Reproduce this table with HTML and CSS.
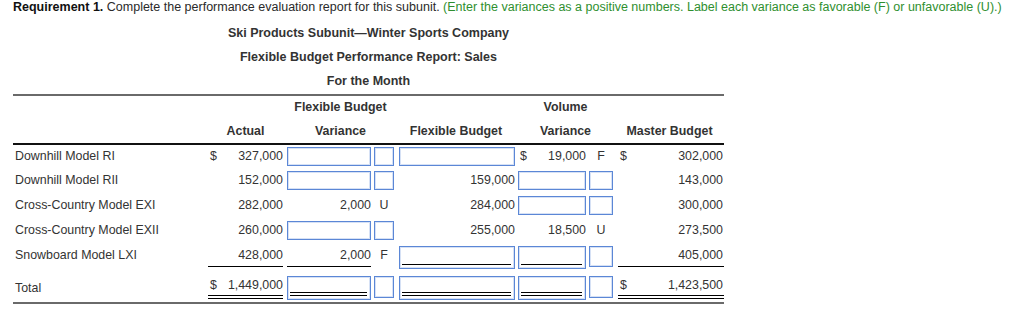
FILE: index.html
```html
<!DOCTYPE html>
<html lang="en">
<head>
<meta charset="utf-8">
<title>Flexible Budget Performance Report</title>
<link rel="stylesheet" href="styles.css">
</head>
<body>
<div class="page">
  <p class="req"><b>Requirement 1.</b> Complete the performance evaluation report for this subunit. <span class="hint">(Enter the variances as a positive numbers. Label each variance as favorable (F) or unfavorable (U).)</span></p>
  <div class="report">
    <div class="titles">
      <div>Ski Products Subunit—Winter Sports Company</div>
      <div>Flexible Budget Performance Report: Sales</div>
      <div>For the Month</div>
    </div>
    <div class="table">
      <div class="row head h1">
        <div></div><div></div>
        <div class="sp">Flexible Budget</div>
        <div></div>
        <div class="sp">Volume</div>
        <div></div>
      </div>
      <div class="row head h2">
        <div></div>
        <div>Actual</div>
        <div class="sp">Variance</div>
        <div>Flexible Budget</div>
        <div class="sp">Variance</div>
        <div>Master Budget</div>
      </div>

      <div class="row r first">
        <div class="cell lbl">Downhill Model RI</div>
        <div class="cell c2"><div class="val"><span class="cur">$</span><span class="n">327,000</span></div></div>
        <div class="cell c3"><div class="inp"></div></div>
        <div class="cell c4"><div class="inp"></div></div>
        <div class="cell c5"><div class="inp"></div></div>
        <div class="cell c6"><div class="val"><span class="cur">$</span><span class="n">19,000</span></div></div>
        <div class="cell c7"><div class="fu">F</div></div>
        <div class="cell c8"><div class="val"><span class="cur">$</span><span class="n">302,000</span></div></div>
      </div>

      <div class="row r">
        <div class="cell lbl">Downhill Model RII</div>
        <div class="cell c2"><div class="val"><span class="n">152,000</span></div></div>
        <div class="cell c3"><div class="inp"></div></div>
        <div class="cell c4"><div class="inp"></div></div>
        <div class="cell c5"><div class="val"><span class="n">159,000</span></div></div>
        <div class="cell c6"><div class="inp"></div></div>
        <div class="cell c7"><div class="inp"></div></div>
        <div class="cell c8"><div class="val"><span class="n">143,000</span></div></div>
      </div>

      <div class="row r">
        <div class="cell lbl">Cross-Country Model EXI</div>
        <div class="cell c2"><div class="val"><span class="n">282,000</span></div></div>
        <div class="cell c3"><div class="val"><span class="n">2,000</span></div></div>
        <div class="cell c4"><div class="fu">U</div></div>
        <div class="cell c5"><div class="val"><span class="n">284,000</span></div></div>
        <div class="cell c6"><div class="inp"></div></div>
        <div class="cell c7"><div class="inp"></div></div>
        <div class="cell c8"><div class="val"><span class="n">300,000</span></div></div>
      </div>

      <div class="row r">
        <div class="cell lbl">Cross-Country Model EXII</div>
        <div class="cell c2"><div class="val"><span class="n">260,000</span></div></div>
        <div class="cell c3"><div class="inp"></div></div>
        <div class="cell c4"><div class="inp"></div></div>
        <div class="cell c5"><div class="val"><span class="n">255,000</span></div></div>
        <div class="cell c6"><div class="val"><span class="n">18,500</span></div></div>
        <div class="cell c7"><div class="fu">U</div></div>
        <div class="cell c8"><div class="val"><span class="n">273,500</span></div></div>
      </div>

      <div class="row r sub">
        <div class="cell lbl">Snowboard Model LXI</div>
        <div class="cell c2"><div class="val u"><span class="n">428,000</span></div></div>
        <div class="cell c3"><div class="val u"><span class="n">2,000</span></div></div>
        <div class="cell c4"><div class="fu">F</div></div>
        <div class="cell c5"><div class="inp line"><span></span></div></div>
        <div class="cell c6"><div class="inp line"><span></span></div></div>
        <div class="cell c7"><div class="inp sbox"></div></div>
        <div class="cell c8"><div class="val u"><span class="n">405,000</span></div></div>
      </div>

      <div class="row r tot">
        <div class="cell lbl">Total</div>
        <div class="cell c2"><div class="val dbl"><span class="cur">$</span><span class="n">1,449,000</span></div></div>
        <div class="cell c3"><div class="inp dline"><span></span></div></div>
        <div class="cell c4"><div class="inp tbox"></div></div>
        <div class="cell c5"><div class="inp dline"><span></span></div></div>
        <div class="cell c6"><div class="inp dline"><span></span></div></div>
        <div class="cell c7"><div class="inp tbox"></div></div>
        <div class="cell c8"><div class="val dbl"><span class="cur">$</span><span class="n">1,423,500</span></div></div>
      </div>
    </div>
  </div>
</div>
</body>
</html>
```

FILE: styles.css
```css
body {
  margin: 0;
  background: #fff;
  color: #333;
  font-family: "Liberation Sans", Arial, sans-serif;
}

.page {
  padding-left: 13px;
}

.req {
  margin: 0;
  font-size: 12.5px;
  line-height: 15px;
  color: #2a2a2a;
  white-space: nowrap;
}

.req b {
  color: #111;
}

.hint {
  color: #2f8f2f;
}

.report {
  width: 711px;
  margin-top: 6px;
}

.titles {
  text-align: center;
  font-weight: bold;
  font-size: 12.5px;
  line-height: 24px;
  margin-bottom: 1px;
}

.table {
  border-top: 2px solid #6a6a6a;
  border-bottom: 2px solid #6a6a6a;
  font-size: 12.4px;
}

.row {
  display: grid;
  grid-template-columns: 193px 79px 87px 24px 120px 72px 27px 109px;
}

.head {
  font-weight: bold;
  text-align: center;
}

.h1 {
  height: 22px;
  line-height: 22px;
}

.h2 {
  height: 25px;
  line-height: 26px;
  border-bottom: 2px solid #111;
}

.sp {
  grid-column: span 2;
}

.r {
  height: 25px;
}

.r.first {
  height: 24px;
}

.r.sub,
.r.tot {
  height: 29px;
}

.cell {
  padding-top: 2px;
}

.tot .cell {
  padding-top: 3px;
}

.lbl {
  padding-left: 2px;
  line-height: 19px;
}

.tot .lbl {
  padding-top: 6px;
}

.c2 { padding-left: 2px; padding-right: 2px; }
.c3 { padding-left: 2px; padding-right: 1px; }
.c4 { padding-left: 2px; padding-right: 2px; }
.c5 { padding-left: 3px; padding-right: 1px; }
.c6 { padding-left: 2px; padding-right: 2px; }
.c7 { padding-left: 1px; padding-right: 2px; }
.c8 { padding-left: 3px; }

.val {
  display: flex;
  height: 19px;
  line-height: 19px;
}

.val .cur {
  padding-left: 2px;
}

.val .n {
  margin-left: auto;
}

.c8 .val .n {
  padding-right: 1px;
}

.val.u {
  height: 20px;
  border-bottom: 1px solid #000;
}

.val.dbl {
  height: 19px;
  border-bottom: 4px double #000;
}

.fu {
  text-align: center;
  line-height: 19px;
}

.inp {
  box-sizing: border-box;
  height: 19px;
  border: 1px solid #5b87d6;
  box-shadow: inset 0 0 0 1px rgba(91, 135, 214, 0.25);
  background: #fff;
}

.inp.line,
.inp.dline {
  display: flex;
  padding: 0 3px 3px 2px;
}

.inp.line {
  height: 23px;
}

.inp.line span {
  flex: 1;
  border-bottom: 1px solid #000;
}

.inp.dline {
  height: 24px;
}

.inp.dline span {
  flex: 1;
  border-bottom: 4px double #000;
}

.inp.sbox {
  height: 21px;
}

.inp.tbox {
  height: 22px;
}
```
